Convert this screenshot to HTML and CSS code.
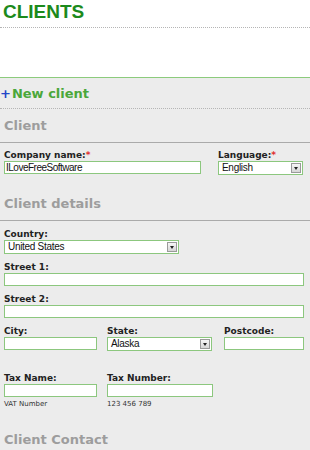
FILE: index.html
```html
<!DOCTYPE html>
<html lang="en">

<head>
  <meta charset="UTF-8">
  <meta name="viewport" content="width=device-width, initial-scale=1.0">
  <title>Clients</title>
  <link rel="stylesheet" href="styles.css">
</head>

<body>
  <!-- Page header -->
  <div class="page-head">
    <h1>CLIENTS</h1>
  </div>

  <!-- New client form -->
  <div class="panel">
    <h2 class="panel-title"><span class="plus">+</span>New client</h2>

    <h3 class="section">Client</h3>
    <div class="row group">
      <div class="field first w-company">
        <label>Company name:<span class="req">*</span></label>
        <input type="text" value="ILoveFreeSoftware">
      </div>
      <div class="field first w-lang">
        <label>Language:<span class="req">*</span></label>
        <div class="select"><span class="value">English</span><span class="arrow"></span></div>
      </div>
    </div>

    <h3 class="section">Client details</h3>
    <div class="field w-country">
      <label>Country:</label>
      <div class="select"><span class="value">United States</span><span class="arrow"></span></div>
    </div>
    <div class="field">
      <label>Street 1:</label>
      <input type="text">
    </div>
    <div class="field">
      <label>Street 2:</label>
      <input type="text">
    </div>
    <div class="row">
      <div class="field w-city">
        <label>City:</label>
        <input type="text">
      </div>
      <div class="field w-state">
        <label>State:</label>
        <div class="select"><span class="value">Alaska</span><span class="arrow"></span></div>
      </div>
      <div class="field w-post">
        <label>Postcode:</label>
        <input type="text">
      </div>
    </div>
    <div class="row tax">
      <div class="field w-city">
        <label>Tax Name:</label>
        <input type="text">
        <small>VAT Number</small>
      </div>
      <div class="field w-taxnum">
        <label>Tax Number:</label>
        <input type="text">
        <small>123 456 789</small>
      </div>
    </div>

    <h3 class="section contact">Client Contact</h3>
  </div>
</body>

</html>
```
FILE: styles.css
```css
/* Reset */
html,
body {
  margin: 0;
  padding: 0;
}

body {
  font-family: "DejaVu Sans", Verdana, sans-serif;
  background-color: #ececec;
  width: 310px;
  height: 450px;
  overflow: hidden;
}

/* Header */
.page-head {
  height: 77px;
  background-color: #fff;
}

h1 {
  margin: 0;
  padding: 1px 0 0 3px;
  height: 28px;
  box-sizing: border-box;
  font-family: "Liberation Sans", Arial, sans-serif;
  font-size: 19px;
  line-height: 22px;
  color: #1c8a1c;
  border-bottom: 1px dotted #b5b5b5;
}

/* Form panel */
.panel {
  border-top: 1px solid #8ccb7c;
  padding: 0 0 0 4px;
}

.panel-title {
  margin: 0 0 0 -4px;
  padding: 8px 0 0 0;
  height: 22px;
  font-size: 13px;
  line-height: 16px;
  color: #4aa73a;
  border-bottom: 1px dotted #b5b5b5;
}

.plus {
  color: #2346c8;
  margin-right: 1px;
}

.section {
  margin: 0 0 0 -4px;
  padding: 9px 0 0 4px;
  height: 24px;
  font-size: 13px;
  line-height: 16px;
  color: #9d9d9d;
  border-bottom: 1px solid #aaa;
}

.row {
  display: flex;
  align-items: flex-start;
}

.group {
  margin-bottom: 12px;
}

.tax {
  margin-top: 14px;
}

.contact {
  margin-top: 14px;
}

.field {
  display: flex;
  flex-direction: column;
  width: 300px;
}

label {
  font-size: 9px;
  font-weight: bold;
  color: #222;
  line-height: 11px;
  padding-top: 8px;
  height: 19px;
  box-sizing: border-box;
}

.first label {
  padding-top: 7px;
  height: 18px;
}

.req {
  color: #e03030;
}

input {
  margin: 0;
  height: 13px;
  padding: 0 1px;
  box-sizing: border-box;
  border: 1px solid #8cc77e;
  background: #fff;
  font-family: "Liberation Sans", Arial, sans-serif;
  font-size: 10px;
  letter-spacing: -0.5px;
  color: #111;
  outline: none;
}

.select {
  display: flex;
  height: 14px;
  box-sizing: border-box;
  border: 1px solid #8cc77e;
  background: #fff;
  font-family: "Liberation Sans", Arial, sans-serif;
  font-size: 10px;
  letter-spacing: -0.3px;
  line-height: 12px;
  color: #111;
}

.select .value {
  flex: 1;
  padding-left: 3px;
}

.select .arrow {
  width: 10px;
  margin: 1px;
  border: 1px solid #9a9a9a;
  box-sizing: border-box;
  background: linear-gradient(#f6f6f6, #d6d6d6);
  display: flex;
  justify-content: center;
  align-items: center;
}

.select .arrow::after {
  content: "";
  border-left: 2px solid transparent;
  border-right: 2px solid transparent;
  border-top: 3px solid #222;
}

small {
  font-size: 7px;
  line-height: 9px;
  color: #333;
  padding-top: 3px;
}

/* Field widths */
.w-company { width: 197px; margin-right: 17px; }
.w-lang { width: 85px; }
.w-country { width: 175px; }
.w-city { width: 93px; margin-right: 10px; }
.w-state { width: 105px; margin-right: 12px; }
.w-post { width: 80px; }
.w-taxnum { width: 106px; }
```
